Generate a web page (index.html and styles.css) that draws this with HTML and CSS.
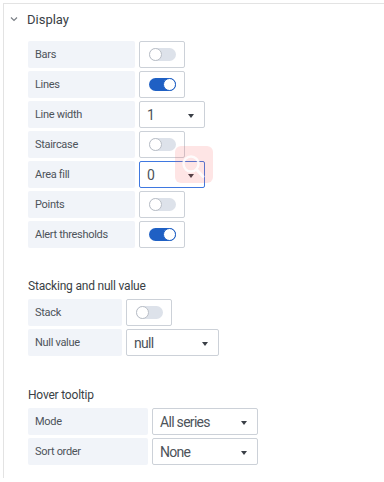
FILE: index.html
```html
<!DOCTYPE html>
<html lang="en">
<head>
    <meta charset="UTF-8">
    <meta name="viewport" content="width=device-width, initial-scale=1.0">
    <title>Display options</title>
    <link rel="stylesheet" href="styles.css">
</head>
<body>
    <div class="panel">
        <div class="section-head">
            <svg class="chevron" width="8" height="6" viewBox="0 0 8 6"><path d="M1 1.5 L4 4.5 L7 1.5" fill="none" stroke="#7b8087" stroke-width="1.2"/></svg>
            <span>Display</span>
        </div>

        <div class="group display">
            <div class="row"><div class="label">Bars</div><div class="box"><span class="switch"></span></div></div>
            <div class="row"><div class="label">Lines</div><div class="box"><span class="switch on"></span></div></div>
            <div class="row"><div class="label">Line width</div><div class="select sm">1<span class="caret"></span></div></div>
            <div class="row"><div class="label">Staircase</div><div class="box"><span class="switch"></span></div></div>
            <div class="row">
                <div class="label">Area fill</div>
                <div class="select sm focus">0<span class="caret"></span></div>
                <div class="zoom-badge">
                    <svg width="38" height="37" viewBox="0 0 38 37"><circle cx="16" cy="18" r="7.5" fill="none" stroke="#fff" stroke-width="2.4"/><path d="M21.5 23.5 L28 30.5" stroke="#fff" stroke-width="3" stroke-linecap="round"/></svg>
                </div>
            </div>
            <div class="row"><div class="label">Points</div><div class="box"><span class="switch"></span></div></div>
            <div class="row"><div class="label">Alert thresholds</div><div class="box"><span class="switch on"></span></div></div>
        </div>

        <div class="group stacking">
            <h3>Stacking and null value</h3>
            <div class="row"><div class="label">Stack</div><div class="box"><span class="switch"></span></div></div>
            <div class="row"><div class="label">Null value</div><div class="select md">null<span class="caret"></span></div></div>
        </div>

        <div class="group hover">
            <h3>Hover tooltip</h3>
            <div class="row"><div class="label">Mode</div><div class="select lg">All series<span class="caret"></span></div></div>
            <div class="row"><div class="label">Sort order</div><div class="select lg">None<span class="caret"></span></div></div>
        </div>
    </div>
</body>
</html>
```

FILE: styles.css
```css
body {
    margin: 0;
    font-family: Roboto, 'Liberation Sans', sans-serif;
    color: #464c54;
    background: #fff;
}

.panel {
    margin: 3px 0 0 3px;
    height: 475px;
    border-top: 1px solid #e3e3e3;
    border-left: 1px solid #e3e3e3;
    padding-left: 24px;
    box-sizing: border-box;
}

.section-head {
    display: flex;
    align-items: center;
    height: 30px;
    margin-left: -18px;
    margin-bottom: 7px;
    font-size: 13px;
    color: #3a3f46;
}

.chevron {
    margin-right: 9px;
}

.group {
    display: flex;
    flex-direction: column;
    gap: 3px;
}

.group h3 {
    margin: 0 0 2px 0;
    font-size: 12px;
    font-weight: normal;
    line-height: 16px;
    letter-spacing: -0.2px;
    color: #3a3f46;
}

.stacking {
    margin-top: 30px;
}

.hover {
    margin-top: 31px;
}

.row {
    display: flex;
    gap: 4px;
    height: 27px;
    position: relative;
}

.label {
    width: 107px;
    padding-left: 7px;
    box-sizing: border-box;
    background: #f1f4f9;
    border-radius: 2px;
    font-size: 11px;
    letter-spacing: -0.3px;
    color: #4d535a;
    display: flex;
    align-items: center;
}

.stacking .label {
    width: 94px;
}

.hover .label {
    width: 120px;
}

.box {
    width: 46px;
    border: 1px solid #ccd1d8;
    border-radius: 2px;
    box-sizing: border-box;
    display: flex;
    align-items: center;
    justify-content: center;
}

.switch {
    width: 27px;
    height: 13px;
    border-radius: 7px;
    background: #dde2ea;
    position: relative;
}

.switch::after {
    content: "";
    position: absolute;
    left: 0;
    top: 0;
    width: 11px;
    height: 11px;
    border-radius: 50%;
    background: #fff;
    border: 1px solid #b9bec6;
}

.switch.on {
    background: #1f60c4;
}

.switch.on::after {
    left: 14px;
    border-color: #1f60c4;
}

.select {
    border: 1px solid #ccd1d8;
    border-radius: 2px;
    box-sizing: border-box;
    padding-left: 7px;
    font-size: 14px;
    letter-spacing: -0.7px;
    color: #4d535a;
    display: flex;
    align-items: center;
    position: relative;
}

.select.sm { width: 66px; }
.select.md { width: 93px; }
.select.lg { width: 106px; }

.select.focus {
    border-color: #3f78e0;
}

.caret {
    position: absolute;
    right: 10px;
    top: 12px;
    border-left: 3.5px solid transparent;
    border-right: 3.5px solid transparent;
    border-top: 4px solid #3a3f46;
}

.zoom-badge {
    position: absolute;
    left: 147px;
    top: -15px;
    width: 38px;
    height: 37px;
    border-radius: 6px;
    background: rgba(250, 80, 80, 0.15);
}

.zoom-badge svg {
    display: block;
    opacity: 0.85;
}
```
